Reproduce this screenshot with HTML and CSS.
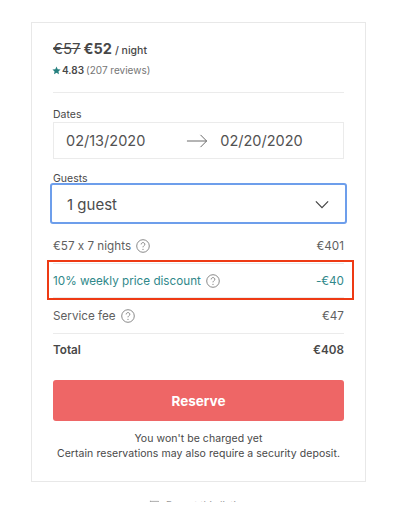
FILE: index.html
```html
<!DOCTYPE html>
<html lang="en">
<head>
<meta charset="utf-8">
<title>Booking</title>
<link rel="stylesheet" href="styles.css">
</head>
<body>
<div class="page">
  <section class="card">
    <div class="price"><s class="old">€57</s> <b class="new">€52</b> <span class="per">/ night</span></div>
    <div class="rating">
      <svg class="star" viewBox="0 0 24 24"><path d="M12 1.5l3.2 6.9 7.6.9-5.6 5.2 1.5 7.5L12 18.3l-6.7 3.7 1.5-7.5-5.6-5.2 7.6-.9z"/></svg>
      <b>4.83</b> <span class="reviews">(207 reviews)</span>
    </div>
    <hr class="rule first">
    <div class="label">Dates</div>
    <div class="dates">
      <span>02/13/2020</span>
      <svg class="arrow" viewBox="0 0 24 16"><path d="M0.5 8H23M16 1l7 7-7 7"/></svg>
      <span>02/20/2020</span>
    </div>
    <div class="label guests-label">Guests</div>
    <div class="guests">
      <span>1 guest</span>
      <svg class="chev" viewBox="0 0 16 10"><path d="M1 1.5l7 7 7-7"/></svg>
    </div>
    <div class="row nights">
      <span class="name">€57 x 7 nights
        <svg class="help" viewBox="0 0 16 16"><circle cx="8" cy="8" r="7.2"/><path d="M5.9 6.2c0-1.3 1-2.1 2.1-2.1s2.1.8 2.1 2c0 1.6-2.1 1.6-2.1 3.4"/><circle class="dot" cx="8" cy="11.7" r=".7"/></svg>
      </span>
      <span>€401</span>
    </div>
    <div class="row discount">
      <span class="name">10% weekly price discount
        <svg class="help" viewBox="0 0 16 16"><circle cx="8" cy="8" r="7.2"/><path d="M5.9 6.2c0-1.3 1-2.1 2.1-2.1s2.1.8 2.1 2c0 1.6-2.1 1.6-2.1 3.4"/><circle class="dot" cx="8" cy="11.7" r=".7"/></svg>
      </span>
      <span>-€40</span>
    </div>
    <div class="row fee">
      <span class="name">Service fee
        <svg class="help" viewBox="0 0 16 16"><circle cx="8" cy="8" r="7.2"/><path d="M5.9 6.2c0-1.3 1-2.1 2.1-2.1s2.1.8 2.1 2c0 1.6-2.1 1.6-2.1 3.4"/><circle class="dot" cx="8" cy="11.7" r=".7"/></svg>
      </span>
      <span>€47</span>
    </div>
    <div class="row total"><span>Total</span><span>€408</span></div>
    <button class="reserve" type="button">Reserve</button>
    <p class="note">You won't be charged yet<br>Certain reservations may also require a security deposit.</p>
  </section>
  <div class="report">
    <div class="report-line">
      <svg class="flag" viewBox="0 0 16 16"><path d="M2 1v14M2 2h12l-3 3.5L14 9H2"/></svg>
      <span>Report this listing</span>
    </div>
  </div>
</div>
</body>
</html>
```
FILE: styles.css
```css
* { box-sizing: border-box; }
html, body { margin: 0; padding: 0; background: #fff; }
body {
  width: 400px;
  height: 512px;
  overflow: hidden;
  font-family: Inter, "Liberation Sans", sans-serif;
  font-feature-settings: "calt" 0;
  color: #484848;
}
.page { padding: 22px 34px 0 31px; }
.card {
  width: 335px;
  height: 460px;
  border: 1px solid #e8e8e8;
  padding: 16px 21px 0;
}
.price { height: 20px; line-height: 20px; font-size: 11px; display: flex; align-items: baseline; gap: 3px; white-space: nowrap; }
.old { font-size: 15px; }
.new { font-size: 14.5px; font-weight: 700; }
.per { font-size: 10.5px; font-weight: 500; }
.rating { height: 14px; margin-top: 4px; margin-left: -1px; line-height: 14px; font-size: 10px; display: flex; align-items: center; gap: 1px; white-space: nowrap; }
.rating b { font-weight: 600; }
.star { width: 9px; height: 9px; fill: #26807f; }
.reviews { color: #767676; margin-left: 1px; }
.rule { border: 0; border-top: 1px solid #ebebeb; margin: 0; }
.first { margin-top: 15px; }
.label { font-size: 10.5px; line-height: 16px; margin-top: 14px; margin-bottom: -1px; }
.dates {
  height: 37px;
  margin-top: 0;
  border: 1px solid #ebebeb;
  display: flex;
  align-items: center;
  gap: 12px;
  padding: 0 12px 0 12px;
  font-size: 14.5px;
  color: #525252;
}
.arrow { width: 22px; height: 14px; margin-left: 29px; fill: none; stroke: #555; stroke-width: 1; }
.guests-label { margin-top: 12px; margin-bottom: 0; }
.guests {
  height: 41px;
  margin: -4px -3px 0;
  border: 2.5px solid #6d9eeb;
  border-radius: 3px;
  padding: 1px 16px 0 15px;
  display: flex;
  align-items: center;
  justify-content: space-between;
  font-size: 15px;
  font-weight: 400;
  color: #4c4c4c;
}
.chev { width: 14px; height: 9px; fill: none; stroke: #444; stroke-width: 1.4; }
.row { display: flex; justify-content: space-between; align-items: center; font-size: 11.7px; white-space: nowrap; }
.name { display: flex; align-items: center; gap: 5px; }
.help { width: 14px; height: 14px; fill: none; stroke: #6a6a6a; stroke-width: .9; }
.help .dot { fill: #6a6a6a; stroke: none; }
.nights { height: 36px; margin-top: 3px; padding-top: 1px; }
.nights, .fee { color: #5f5f5f; }
.discount {
  position: relative;
  height: 35px;
  color: #30888a;
  border-top: 1px solid #ebebeb;
  border-bottom: 1px solid #ebebeb;
}
.discount::after {
  content: "";
  position: absolute;
  left: -6px;
  right: -10px;
  top: -4px;
  bottom: -3px;
  border: 2px solid #ee3a14;
  pointer-events: none;
}
.fee { height: 35px; }
.total { height: 34px; padding-bottom: 1px; border-top: 1px solid #ebebeb; font-weight: 600; color: #484848; }
.reserve {
  display: block;
  width: 291px;
  height: 41px;
  margin-top: 13px;
  border: 0;
  border-radius: 3px;
  background: #ee6666;
  color: #fff;
  font: 700 13.5px Inter, "Liberation Sans", sans-serif;
}
.note { margin: 10px 0 0; text-align: center; font-size: 10.5px; line-height: 15px; letter-spacing: .005em; color: #484848; white-space: nowrap; }
.report { height: 20px; overflow: hidden; }
.report-line { display: flex; justify-content: center; align-items: center; gap: 6px; height: 20px; margin-top: 13px; font-size: 10px; color: #999; }
.flag { width: 11px; height: 11px; fill: none; stroke: #888; stroke-width: 1; }
```
